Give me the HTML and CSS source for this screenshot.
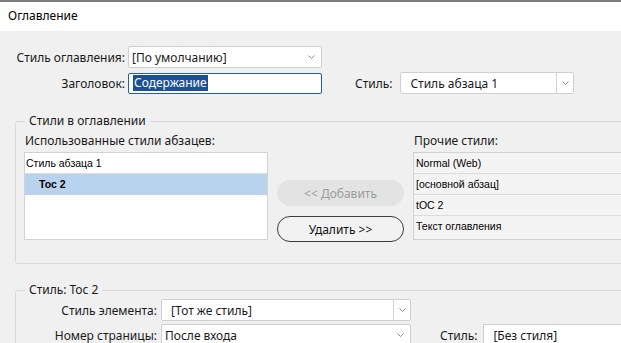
FILE: index.html
```html
<!DOCTYPE html>
<html lang="ru">
<head>
<meta charset="utf-8">
<link rel="stylesheet" href="styles.css">
</head>
<body>
<div class="titlebar">Оглавление</div>
<div class="content">
  <div class="row r1">
    <span class="lbl w-top">Стиль оглавления:</span>
    <div class="combo c-toc"><span class="val">[По умолчанию]</span><svg class="chev" width="7" height="4" viewBox="0 0 7 4"><polyline points="0.5,0.5 3.5,3.5 6.5,0.5" fill="none" stroke="#8a8a8a" stroke-width="1"/></svg></div>
  </div>
  <div class="row r2">
    <span class="lbl w-top">Заголовок:</span>
    <div class="input"><span class="sel">Содержание</span></div>
    <span class="lbl style-lbl">Стиль:</span>
    <div class="combo split c-style"><span class="val pad">Стиль абзаца 1</span><div class="dd"><svg width="7" height="4" viewBox="0 0 7 4"><polyline points="0.5,0.5 3.5,3.5 6.5,0.5" fill="none" stroke="#8a8a8a" stroke-width="1"/></svg></div></div>
  </div>

  <fieldset class="group g1">
    <legend>Стили в оглавлении</legend>
    <div class="cols">
      <div class="col col-left">
        <div class="cap">Использованные стили абзацев:</div>
        <div class="list list-used">
          <div class="item">Стиль абзаца 1</div>
          <div class="item selected">Toc 2</div>
        </div>
      </div>
      <div class="btns">
        <div class="pill disabled">&lt;&lt; Добавить</div>
        <div class="pill">Удалить &gt;&gt;</div>
      </div>
      <div class="col col-right">
        <div class="cap">Прочие стили:</div>
        <div class="list list-other">
          <div class="item">Normal (Web)</div>
          <div class="item">[основной абзац]</div>
          <div class="item">tOC 2</div>
          <div class="item">Текст оглавления</div>
        </div>
      </div>
    </div>
  </fieldset>

  <fieldset class="group g2">
    <legend>Стиль: Toc 2</legend>
    <div class="row r3">
      <span class="lbl w-el">Стиль элемента:</span>
      <div class="combo split c-el"><span class="val pad">[Тот же стиль]</span><div class="dd"><svg width="7" height="4" viewBox="0 0 7 4"><polyline points="0.5,0.5 3.5,3.5 6.5,0.5" fill="none" stroke="#8a8a8a" stroke-width="1"/></svg></div></div>
    </div>
    <div class="row r4">
      <span class="lbl w-el">Номер страницы:</span>
      <div class="combo c-el"><span class="val">После входа</span><svg class="chev" width="7" height="4" viewBox="0 0 7 4"><polyline points="0.5,0.5 3.5,3.5 6.5,0.5" fill="none" stroke="#8a8a8a" stroke-width="1"/></svg></div>
      <span class="lbl style-lbl2">Стиль:</span>
      <div class="box c-nostyle"><span class="val pad">[Без стиля]</span></div>
    </div>
  </fieldset>
</div>
</body>
</html>
```

FILE: styles.css
```css
* { box-sizing: border-box; }
html, body { margin: 0; padding: 0; }
body {
  width: 621px;
  height: 343px;
  overflow: hidden;
  background: #f0f0f0;
  font-family: "Noto Sans", "Open Sans", sans-serif;
  font-size: 12px;
  color: #1a1a1a;
}
.titlebar {
  height: 31px;
  border-top: 2px solid #7d7d7d;
  background: #ffffff;
  padding-left: 8px;
  line-height: 28px;
  font-size: 12px;
  color: #000;
}
.content { padding-top: 15px; }
.row { display: flex; align-items: center; }
.r1 { height: 22px; }
.r2 { height: 22px; margin-top: 4px; }
.lbl { white-space: nowrap; }
.w-top { width: 125px; text-align: right; margin-right: 3px; }
.combo, .box, .input {
  height: 22px;
  background: #ffffff;
  border: 1px solid #cfcfcf;
  border-radius: 2px;
  display: flex;
  align-items: center;
  white-space: nowrap;
  overflow: hidden;
}
.val { flex: 1; padding-left: 3px; }
.val.pad { padding-left: 9px; }
.chev { margin-right: 6px; flex: none; }
.c-toc { width: 194px; }
.input {
  width: 194px;
  height: 21px;
  border-color: #1f5fae;
  padding-left: 4px;
}
.sel { background: #1c4f96; color: #ffffff; line-height: 16px; padding: 0 1px; }
.style-lbl { margin-left: 33px; margin-right: 8px; }
.c-style { width: 174px; }
.split .dd {
  width: 17px;
  height: 100%;
  border-left: 1px solid #d4d4d4;
  display: flex;
  align-items: center;
  justify-content: center;
  flex: none;
}

.group {
  margin: 0;
  margin-left: 15px;
  width: 640px;
  border: 1px solid #d9d9d9;
  border-radius: 3px;
  padding: 0 0 0 8px;
  min-width: 0;
}
.group legend {
  padding: 0 4px;
  margin-left: 1px;
  line-height: 16px;
}
.g1 { margin-top: 19px; padding-bottom: 21px; }
.cols { display: flex; padding-top: 3px; }
.col { display: flex; flex-direction: column; }
.cap { height: 20px; line-height: 17px; padding-left: 1px; }
.col-left { width: 244px; }
.col-right { flex: 1; margin-left: 9px; }
.list {
  border: 1px solid #d2d2d2;
  height: 88px;
  font-family: "Liberation Sans", Arial, sans-serif;
  font-size: 10.5px;
  color: #000;
}
.list-used { background: #ffffff; }
.list-other { background: #f4f4f4; border-right: none; }
.item {
  height: 21px;
  line-height: 21px;
  padding-left: 1px;
  border-bottom: 1px solid #dcdcdc;
  white-space: nowrap;
}
.list-other .item { padding-left: 2px; }
.list-other .item:last-child { border-bottom: none; }
.item.selected {
  background: #b9d3ef;
  font-weight: bold;
  padding-left: 14px;
  border-bottom: none;
}
.btns {
  width: 127px;
  margin-left: 9px;
  padding-top: 48px;
  display: flex;
  flex-direction: column;
  gap: 10px;
}
.pill {
  height: 26px;
  border-radius: 13px;
  border: 1px solid #3d3d3d;
  background: #f2f2f2;
  display: flex;
  align-items: center;
  justify-content: center;
  color: #111;
}
.pill.disabled {
  border-color: #e3e3e3;
  background: #e3e3e3;
  color: #9c9c9c;
}

.g2 { margin-top: 18px; height: 80px; padding-top: 1px; }
.r3 { height: 22px; }
.r4 { height: 22px; margin-top: 3px; }
.w-el { width: 133px; text-align: right; margin-right: 4px; }
.c-el { width: 250px; }
.style-lbl2 { margin-left: 29px; margin-right: 6px; }
.c-nostyle { flex: 1; border-right: none; border-radius: 0; }
```
